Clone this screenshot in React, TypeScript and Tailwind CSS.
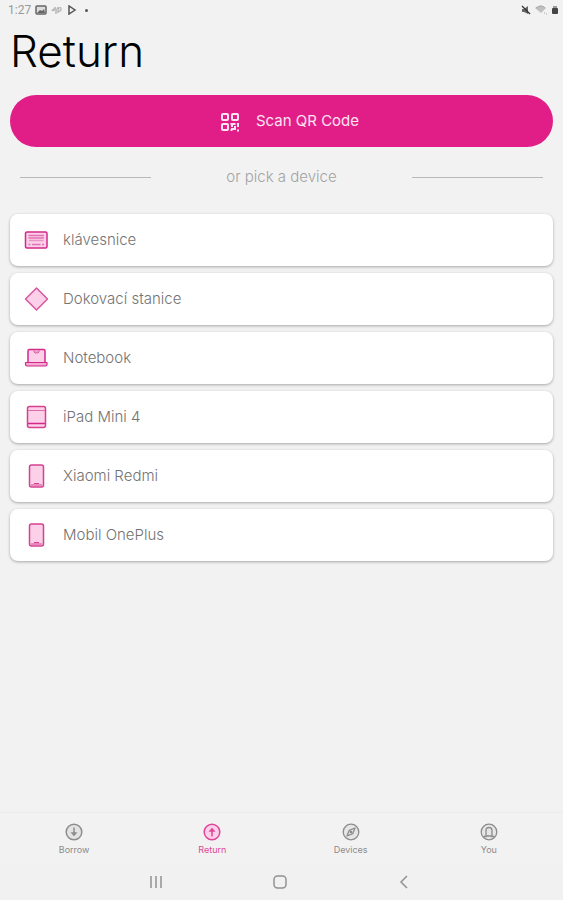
import type { ReactNode } from "react";

type IconProps = { className?: string };

function KeyboardIcon() {
  return (
    <svg viewBox="0 0 24 24" className="size-6" fill="none" stroke="#d6278a" aria-hidden="true">
      <rect x="1.5" y="4" width="21.500" height="16" rx="1.5" fill="#fbd0e8" strokeWidth="1.5" />
      <path d="M4.5 7.500h15.500M4.500 10h15.500" stroke="#e272b3" strokeWidth="1.5" />
      <path d="M5 12.500h14.500" stroke="#e994c4" strokeWidth="1.500" />
      <path d="M4.5 16.500h2M8 16.500h8.500M18 16.500h2" stroke="#e272b3" strokeWidth="1.5" />
    </svg>
  );
}

function DiamondIcon() {
  return (
    <svg viewBox="0 0 24 24" className="size-6" aria-hidden="true">
      <path d="M12.500 1 23.500 12 12.500 23 1.500 12Z" fill="#fbd0e8" stroke="#d9559f" strokeWidth="1.5" strokeLinejoin="round" />
    </svg>
  );
}

function LaptopIcon() {
  return (
    <svg viewBox="0 0 24 24" className="size-6" fill="#fbd0e8" stroke="#d6278a" strokeLinejoin="round" aria-hidden="true">
      <path d="M4 16V5q0-1.500 1.500-1.500h14Q21 3.500 21 5v11" strokeWidth="1.500" />
      <path d="M1.500 16.500h21.500v2q0 1.500-1.500 1.500H3q-1.500 0-1.500-1.500Z" fill="#f3a9d0" strokeWidth="1.200" />
      <path d="M10 4v2l1 1h3l1-1V4" fill="#eda0c9" stroke="#dc62a6" strokeWidth="1" />
    </svg>
  );
}

function TabletIcon() {
  return (
    <svg viewBox="0 0 24 24" className="size-6" fill="#fbd0e8" stroke="#d6408f" aria-hidden="true">
      <rect x="3.500" y="1.500" width="18" height="21" rx="2" strokeWidth="1.500" />
      <path d="M4 5.500h17" stroke="#df6cac" strokeWidth="1" />
      <path d="M4 18.500h17" stroke="#d6278a" strokeWidth="1.500" />
    </svg>
  );
}

function PhoneIcon() {
  return (
    <svg viewBox="0 0 24 24" className="size-6" fill="#fbd0e8" stroke="#d6408f" aria-hidden="true">
      <rect x="5.500" y="1" width="14" height="22" rx="2" strokeWidth="1.500" />
      <path d="M7 21h11M10 19.500h5" strokeWidth="1" />
    </svg>
  );
}

function QrIcon() {
  return (
    <svg viewBox="0 0 20 20" className="size-5" fill="none" stroke="#ffe3f3" strokeWidth="2" aria-hidden="true">
      <rect x="2" y="2" width="6" height="6" rx="1" />
      <rect x="12" y="2" width="6" height="6" rx="1" />
      <rect x="2" y="12" width="6" height="6" rx="1" />
      <path d="M10.500 12h5M12 11v4M18 11v4M15 14v3h-4M17 18.500h2M10.500 18h2" />
    </svg>
  );
}

function BorrowIcon({ className }: IconProps) {
  return (
    <svg viewBox="0 0 18 18" className={className} fill="#e3e3e3" stroke="currentColor" strokeWidth="1.500" aria-hidden="true">
      <circle cx="9" cy="9" r="7.800" />
      <path d="M9 4.500v7.500" fill="none" />
      <path d="M6 9.500h6l-3 3.500Z" fill="currentColor" strokeWidth=".5" />
    </svg>
  );
}

function ReturnIcon({ className }: IconProps) {
  return (
    <svg viewBox="0 0 18 18" className={className} fill="#fbd0e8" stroke="currentColor" strokeWidth="1.500" aria-hidden="true">
      <circle cx="9" cy="9" r="7.800" />
      <path d="M9 13.500V6" fill="none" />
      <path d="M6 8.500h6L9 5Z" fill="currentColor" strokeWidth=".5" />
    </svg>
  );
}

function CompassIcon({ className }: IconProps) {
  return (
    <svg viewBox="0 0 18 18" className={className} fill="#e6e6e6" stroke="currentColor" strokeWidth="1.300" strokeLinejoin="round" aria-hidden="true">
      <circle cx="9" cy="9" r="7.800" />
      <path d="m13 5-2.300 5.700L5 13l2.300-5.700Z" />
      <circle cx="9" cy="9" r=".7" fill="currentColor" />
    </svg>
  );
}

function UserIcon({ className }: IconProps) {
  return (
    <svg viewBox="0 0 18 18" className={className} fill="#e6e6e6" stroke="currentColor" strokeWidth="1.300" aria-hidden="true">
      <circle cx="9" cy="9" r="7.800" />
      <path d="M3.500 13.500h2.500V7.500Q6 4.500 9 4.500t3 3v6h2.500M6 13h6" />
    </svg>
  );
}

const devices: { name: string; icon: ReactNode }[] = [
  { name: "klávesnice", icon: <KeyboardIcon /> },
  { name: "Dokovací stanice", icon: <DiamondIcon /> },
  { name: "Notebook", icon: <LaptopIcon /> },
  { name: "iPad Mini 4", icon: <TabletIcon /> },
  { name: "Xiaomi Redmi", icon: <PhoneIcon /> },
  { name: "Mobil OnePlus", icon: <PhoneIcon /> },
];

const tabs = [
  { name: "Borrow", Icon: BorrowIcon },
  { name: "Return", Icon: ReturnIcon },
  { name: "Devices", Icon: CompassIcon },
  { name: "You", Icon: UserIcon },
];

function StatusBar() {
  return (
    <div className="flex h-5 items-center justify-between pr-1 pl-2 font-[Roboto,sans-serif] text-xs text-[#999]">
      <div className="flex items-center gap-1">
        <span>1:27</span>
        <svg viewBox="0 0 12 10" className="h-[10px] w-3" aria-hidden="true">
          <rect x="1" y="1" width="10" height="8" rx="1" fill="#ddd" stroke="#666" strokeWidth="1.500" />
          <path d="m2 8 3-3 2 1 2-2 1 4Z" fill="#666" />
        </svg>
        <svg viewBox="0 0 12 10" className="h-[10px] w-3" fill="none" stroke="#aaa" strokeWidth="1.200" aria-hidden="true">
          <path d="M1 6q1-3 2 0V4q1-3 2 0v5M7 2v6M7 4q3-3 3 0t-3 2" />
        </svg>
        <svg viewBox="0 0 10 10" className="size-[10px]" fill="none" stroke="#555" strokeWidth="1.500" aria-hidden="true">
          <path d="M2 1v8l6-4Z" />
        </svg>
        <span className="ml-1 size-[3px] rounded-full bg-[#555]" />
      </div>
      <div className="flex items-center gap-1">
        <svg viewBox="0 0 10 10" className="size-[10px]" aria-hidden="true">
          <path d="M1 4h2l4-3v8L3 7H1Z" fill="#666" />
          <path d="m1 1 8 8" stroke="#333" strokeWidth="1.300" />
        </svg>
        <svg viewBox="0 0 12 10" className="h-[10px] w-3" aria-hidden="true">
          <path d="M0 3q6-5 11 0L6 8Z" fill="#c0c0c0" />
          <path d="M1 3q5-4 9 0M9 8h1M11 9h1" fill="none" stroke="#aaa" />
        </svg>
        <svg viewBox="0 0 8 10" className="h-[10px] w-2" aria-hidden="true">
          <path d="M2 4V1h4v3" fill="#999" />
          <rect x="1" y="3" width="6" height="6" rx="1" fill="#444" />
        </svg>
      </div>
    </div>
  );
}

export default function App() {
  return (
    <div className="flex min-h-screen flex-col bg-[#f2f2f2] font-[Inter,sans-serif] text-[#737373]">
      <StatusBar />
      <main className="flex grow flex-col px-[10px]">
        <h1 className="mt-[3px] text-[44px] leading-[56px] font-light text-black">Return</h1>
        <button type="button" className="mt-4 flex h-[52px] items-center justify-center gap-4 rounded-full bg-[#e11e87] pt-px pl-4 text-[15px] text-[#ffe3f3]">
          <QrIcon />
          Scan QR Code
        </button>
        <div className="mt-5 grid grid-cols-[1fr_2fr_1fr] items-center px-[10px] text-[15px] leading-5 text-[#a3a3a3]">
          <span className="h-px bg-[#b9b9b9]" />
          <span className="text-center font-light">or pick a device</span>
          <span className="h-px bg-[#b9b9b9]" />
        </div>
        <ul className="mt-[27px] flex flex-col gap-[7px]">
          {devices.map((device) => (
            <li key={device.name}>
              <button type="button" className="flex h-[52px] w-full items-center gap-[15px] rounded-lg bg-white px-[14px] text-left text-[15px] font-light shadow-[0_1px_3px_#00000050]">
                {device.icon}
                {device.name}
              </button>
            </li>
          ))}
        </ul>
      </main>
      <nav aria-label="Main" className="grid h-[52px] grid-cols-4 border-t border-[#ebebeb] px-[5px]">
        {tabs.map(({ name, Icon }) => (
          <a
            key={name}
            href={"#" + name.toLowerCase()}
            aria-current={name === "Return" ? "page" : undefined}
            className="flex flex-col items-center gap-[3px] pt-[10px] text-[9px] leading-3 text-[#8c8c8c] aria-[current=page]:text-[#df4698]"
          >
            <Icon className="size-[18px]" />
            {name}
          </a>
        ))}
      </nav>
      <div className="flex h-9 items-center justify-center gap-[110px] bg-[#f1f1f1] pr-1 text-[#929292]">
        <button type="button" aria-label="Recent apps">
          <svg viewBox="0 0 14 14" className="size-[14px]" stroke="currentColor" strokeWidth="1.500">
            <path d="M2 1v12M7 1v12M12 1v12" />
          </svg>
        </button>
        <button type="button" aria-label="Home">
          <svg viewBox="0 0 14 14" className="size-[14px]" fill="none" stroke="currentColor" strokeWidth="1.500">
            <rect x="1" y="1" width="12" height="12" rx="3.500" />
          </svg>
        </button>
        <button type="button" aria-label="Back">
          <svg viewBox="0 0 14 14" className="size-[14px]" fill="none" stroke="currentColor" strokeWidth="1.500">
            <path d="M10 1 4 7l6 6" />
          </svg>
        </button>
      </div>
    </div>
  );
}
